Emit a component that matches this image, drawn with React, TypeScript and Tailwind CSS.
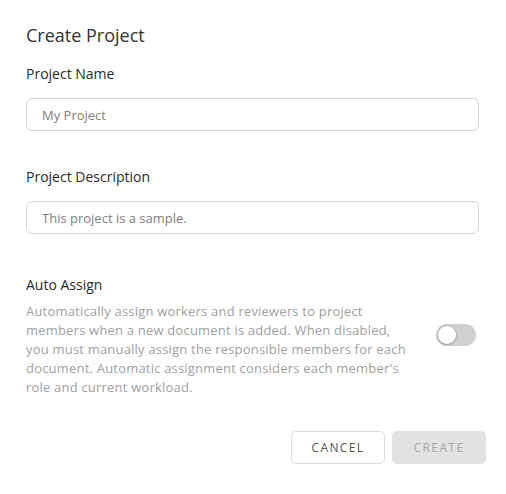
import { useState } from 'react';

const font = { fontFamily: '"Open Sans", "Noto Sans CJK KR", sans-serif' };

const Toggle = ({ on, onChange }: { on: boolean; onChange: (v: boolean) => void }) => (
  <button
    type="button"
    onClick={() => onChange(!on)}
    className={`relative h-[22px] w-[40px] shrink-0 rounded-full transition-colors ${on ? 'bg-[#4a90e2]' : 'bg-[#cfcfcf]'}`}
  >
    <span
      className={`absolute top-[2px] h-[18px] w-[18px] rounded-full bg-white shadow-[0_0_0_1px_rgba(0,0,0,0.08),0_1px_2px_rgba(0,0,0,0.2)] transition-all ${on ? 'left-[20px]' : 'left-[2px]'}`}
    />
  </button>
);

const App = () => {
  const [name, setName] = useState('My Project');
  const [desc, setDesc] = useState('This project is a sample.');
  const [autoAssign, setAutoAssign] = useState(false);

  return (
    <div style={font} className="min-h-screen w-[506px] bg-white pl-[26px] pr-[27px] pt-[21px] text-[#222]">
      <h1 className="text-[18px] leading-[28px] text-[#333]">Create Project</h1>

      <label className="mt-[15px] block text-[14px] leading-[20px] text-[#2a2a2a]">Project Name</label>
      <input
        value={name}
        onChange={(e) => setName(e.target.value)}
        className="mt-[14px] block h-[33px] w-full rounded-[6px] border border-[#d4d4d4] px-[15px] text-[13px] text-[#808080] outline-none"
      />

      <label className="mt-[36px] block text-[14px] leading-[20px] text-[#2a2a2a]">Project Description</label>
      <input
        value={desc}
        onChange={(e) => setDesc(e.target.value)}
        className="mt-[14px] block h-[33px] w-full rounded-[6px] border border-[#d4d4d4] px-[15px] text-[13px] text-[#808080] outline-none"
      />

      <div className="mt-[41px] flex items-center justify-between">
        <div>
          <div className="text-[14px] leading-[20px] text-[#2a2a2a]">Auto Assign</div>
          <p className="mt-[7px] text-[13px] leading-[19px] tracking-[0.2px] text-[#a0a0a0]">
            Automatically assign workers and reviewers to project
            <br />
            members when a new document is added. When disabled,
            <br />
            you must manually assign the responsible members for each
            <br />
            document. Automatic assignment considers each member's
            <br />
            role and current workload.
          </p>
        </div>
        <div className="mr-[3px] mt-[4px]">
          <Toggle on={autoAssign} onChange={setAutoAssign} />
        </div>
      </div>

      <div className="-mr-[7px] mt-[34px] flex justify-end gap-[7px]">
        <button className="h-[33px] w-[94px] rounded-[5px] border border-[#dcdcdc] bg-white text-[12px] tracking-[1.4px] text-[#555]">
          CANCEL
        </button>
        <button disabled className="h-[33px] w-[94px] rounded-[5px] bg-[#e2e2e2] text-[12px] tracking-[1.4px] text-[#a8a8a8]">
          CREATE
        </button>
      </div>
    </div>
  );
};

export default App;
